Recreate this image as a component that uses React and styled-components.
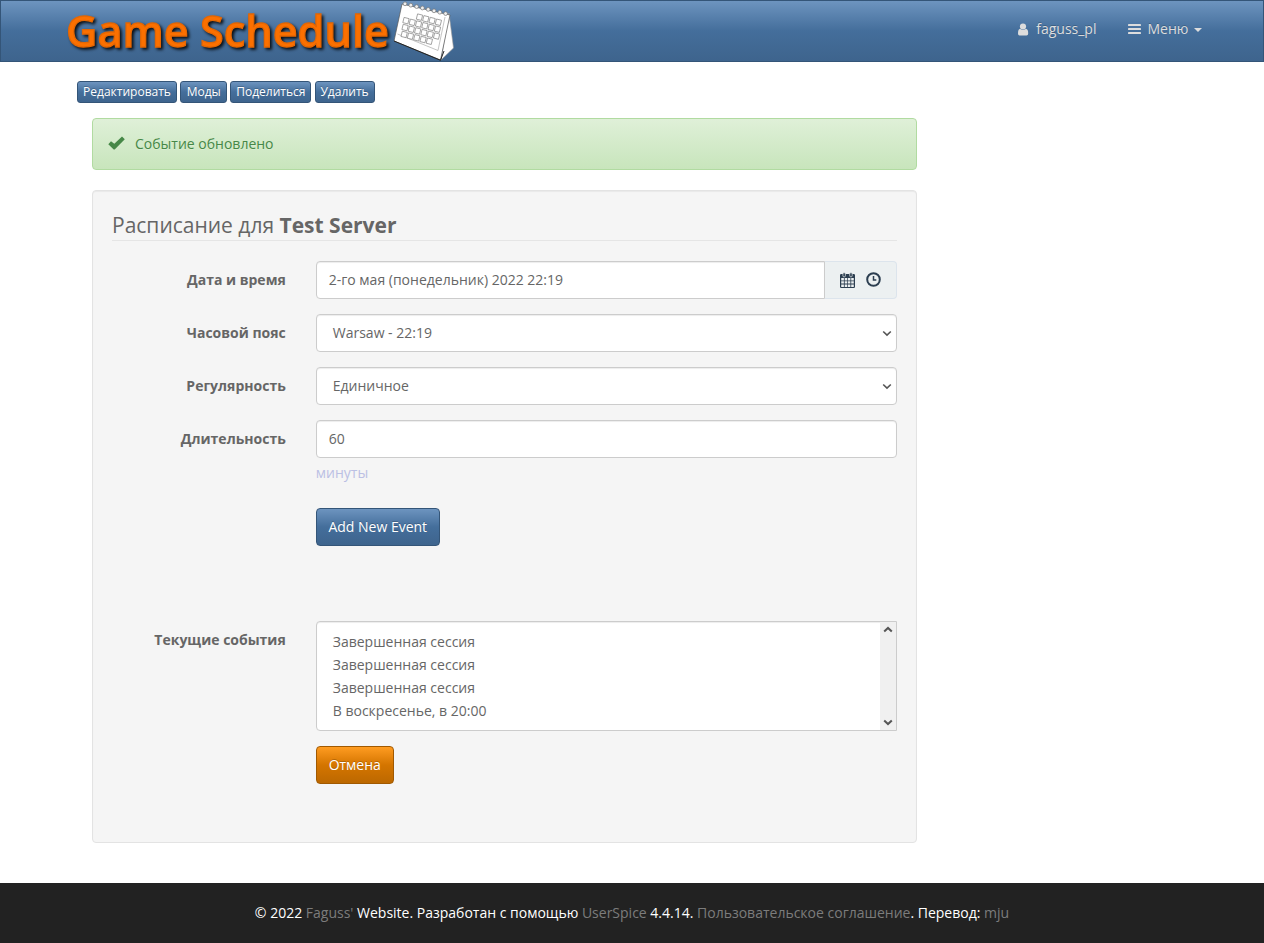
import React from "react";
import styled, { createGlobalStyle, css } from "styled-components";

const Global = createGlobalStyle`
  * { box-sizing: border-box; }
  body {
    margin: 0;
    background: #fff;
    color: #666;
    font: 14px/20px "Open Sans", "Liberation Sans", sans-serif;
  }
`;

const blueGradient = css`
  background: linear-gradient(#6d94bf, #446e9b 50%, #3e648d);
  border: 1px solid #345578;
`;
const orangeGradient = css`
  background: linear-gradient(#ff9c21, #d47500 50%, #bc6800);
  border: 1px solid #a15900;
`;

const Page = styled.div`
  display: flex;
  flex-direction: column;
  height: 943px;
  overflow: hidden;
`;
const Navbar = styled.nav`
  ${blueGradient}
  display: flex;
  justify-content: space-between;
  height: 62px;
  flex: none;
  padding: 0 61px 0 61px;
`;
const Logo = styled.svg`
  display: block;
  width: 400px;
  height: 60px;
  overflow: visible;
`;
const LogoText = styled.text`
  font: 600 44px "Open Sans", "Noto Sans", sans-serif;
  fill: #fb7000;
  stroke: #e56703;
  stroke-width: 1.3px;
  filter: drop-shadow(2px 2px 1.5px rgba(0, 0, 0, 0.85));
`;
const NavLinks = styled.div`
  display: flex;
  gap: 32px;
  padding-top: 18px;
`;
const NavLink = styled.a`
  display: flex;
  height: 20px;
  align-items: center;
  color: #ddd;
  text-shadow: 0 -1px 0 rgba(0, 0, 0, 0.2);
`;
const NavIcon = styled.svg`
  display: block;
  margin-right: ${(p) => p.$gap}px;
`;
const Caret = styled.span`
  margin: 2px 0 0 5.6px;
  border-top: 4px solid #ddd;
  border-left: 4px solid transparent;
  border-right: 4px solid transparent;
`;

const Main = styled.main`
  flex: 1;
  width: 1110px;
  margin: 19px 0 0 77px;
`;
const Toolbar = styled.div`
  display: flex;
  gap: 3.2px;
`;
const SmallButton = styled.button`
  ${blueGradient}
  width: ${(p) => p.$width}px;
  height: 22px;
  padding: 0;
  border-radius: 3px;
  color: #fff;
  font: 12px/18px "Open Sans", sans-serif;
  white-space: nowrap;
  text-shadow: 0 -1px 0 rgba(0, 0, 0, 0.2);
`;
const Content = styled.div`
  width: 825px;
  margin: 15px 0 0 15px;
`;
const Alert = styled.div`
  display: flex;
  align-items: center;
  height: 52px;
  padding: 0 15px;
  margin-bottom: 20px;
  border: 1px solid #b1dba1;
  border-radius: 4px;
  background: linear-gradient(#dff0d8, #c8e5bc);
  color: #468847;
  text-shadow: 0 1px 0 rgba(255, 255, 255, 0.2);
`;
const CheckIcon = styled.svg`
  margin: -3px 10px 0 0;
`;
const Well = styled.section`
  height: 653px;
  padding: 19px;
  border: 1px solid #e3e3e3;
  border-radius: 4px;
  background: #f5f5f5;
  box-shadow: inset 0 1px 1px rgba(0, 0, 0, 0.05);
`;
const Title = styled.h2`
  height: 31px;
  margin: 0 0 20px;
  border-bottom: 1px solid #e5e5e5;
  font-size: 21px;
  font-weight: 400;
  line-height: 30px;
`;
const Row = styled.div`
  display: grid;
  grid-template-columns: 173.75px 581.25px;
  column-gap: 30px;
  margin-bottom: ${(p) => p.$after ?? 15}px;
`;
const Label = styled.label`
  padding-top: 9px;
  font-weight: 700;
  text-align: right;
`;
const Field = styled.div`
  grid-column: 2;
`;
const Control = styled.div`
  display: flex;
  align-items: center;
  justify-content: space-between;
  height: 38px;
  flex: 1;
  padding: 0 4px 0 ${(p) => (p.$select ? 16 : 12)}px;
  border: 1px solid #ccc;
  border-radius: ${(p) => (p.$joined ? "4px 0 0 4px" : "4px")};
  background: #fff;
  box-shadow: inset 0 1px 1px rgba(0, 0, 0, 0.075);
`;
const InputGroup = styled.div`
  display: flex;
`;
const Addon = styled.div`
  display: flex;
  align-items: center;
  gap: 11px;
  width: 72px;
  padding-left: 15px;
  border: 1px solid #dce4ec;
  border-left: 0;
  border-radius: 0 4px 4px 0;
  background: #ecf0f1;
`;
const Hint = styled.p`
  margin: 5px 0 10px;
  color: #bbc0e4;
`;
const Button = styled.button`
  ${(p) => (p.$warning ? orangeGradient : blueGradient)}
  display: block;
  width: ${(p) => p.$width}px;
  height: 38px;
  padding: 0;
  border-radius: 4px;
  color: #fff;
  font: 14px/20px "Open Sans", sans-serif;
  text-shadow: 0 -1px 0 rgba(0, 0, 0, 0.2);
`;
const ListBox = styled.div`
  display: flex;
  justify-content: space-between;
  height: 110px;
  border: 1px solid #ccc;
  border-radius: 4px 0 0 4px;
  background: #fff;
  box-shadow: inset 0 1px 1px rgba(0, 0, 0, 0.075);
`;
const Options = styled.ul`
  margin: 0;
  padding: 8px 0 0 16px;
  list-style: none;
  line-height: 23px;
`;
const Scrollbar = styled.div`
  display: flex;
  flex-direction: column;
  justify-content: space-between;
  align-items: center;
  width: 16px;
  padding: 4px 0;
  background: #f0f0f0;
`;
const Footer = styled.footer`
  flex: none;
  height: 60px;
  padding-top: 20px;
  background: #222;
  color: #fff;
  text-align: center;
`;
const FooterLink = styled.a`
  color: #7c7c7c;
`;

const calendarCells = [
  [2, 3, 4, 5],
  [0, 1, 2, 3, 4, 5],
  [0, 1, 2, 3, 4, 5],
  [0, 1, 2, 3, 4],
];

function DeskCalendar() {
  return (
    <g strokeLinejoin="round">
      <path d="M387 12 L391.500 47 L379 59Z" fill="#fff" stroke="#999" strokeWidth=".6" />
      <path d="M340 3 L388 14 L378.500 59 L332 40Z" fill="#fff" stroke="#555" strokeWidth=".7" />
      <path d="M332 40 L378.500 59.300 L382 50" fill="none" stroke="#222" strokeWidth="1" />
      <path d="M335.500 33 L376 49.500 L383 16" fill="none" stroke="#aaa" strokeWidth=".7" />
      {calendarCells.map((row, r) =>
        row.map((c) => (
          <rect
            key={`${r}-${c}`}
            width="5.200"
            height="5.400"
            fill="#fff"
            stroke="#888"
            strokeWidth=".7"
            transform={`translate(${343 + c * 6.3 - r * 0.9} ${9.500 + c * 1.7 + r * 6.9}) rotate(14)`}
          />
        ))
      )}
      {[0, 1, 2, 3, 4, 5, 6, 7].map((i) => (
        <ellipse key={i} cx={343 + i * 5.8} cy={2.8 + i * 1.4} rx="1.9" ry="1.9" fill="#eee" stroke="#777" strokeWidth=".7" />
      ))}
    </g>
  );
}

function Chevron({ up, heavy }) {
  return (
    <svg width="10" height="7" viewBox="0 0 10 7" fill="none" stroke="#555" strokeWidth={heavy ? 2 : 1.6}>
      <path d={up ? "M1.200 5.500 L5 1.900 L8.800 5.500" : "M1.200 1.500 L5 5.100 L8.800 1.500"} />
    </svg>
  );
}

function CalendarIcon() {
  return (
    <svg width="15" height="16" viewBox="0 0 15 16" fill="#2c3e50">
      <path fillRule="evenodd" d="M1.200 2H13.800Q15 2 15 3.200V14.800Q15 16 13.800 16H1.200Q0 16 0 14.800V3.200Q0 2 1.200 2ZM1.200 6V8.400H3.900V6ZM4.700 6V8.400H7.200V6ZM7.900 6V8.400H10.400V6ZM11.200 6V8.400H13.800V6ZM1.200 9.200V11.600H3.900V9.200ZM4.700 9.200V11.600H7.200V9.200ZM7.900 9.200V11.600H10.400V9.200ZM11.200 9.200V11.600H13.800V9.200ZM1.200 12.400V14.900H3.900V12.400ZM4.700 12.400V14.900H7.200V12.400ZM7.900 12.400V14.900H10.400V12.400ZM11.200 12.400V14.900H13.800V12.400Z" />
      <rect x="2.900" y=".8" width="2.500" height="4" rx="1" stroke="#ecf0f1" strokeWidth=".7" />
      <rect x="9.700" y=".8" width="2.500" height="4" rx="1" stroke="#ecf0f1" strokeWidth=".7" />
    </svg>
  );
}

function ClockIcon() {
  return (
    <svg width="16" height="16" viewBox="0 0 16 16" fill="none" stroke="#2c3e50">
      <circle cx="7.500" cy="7.500" r="6.300" strokeWidth="2" />
      <path d="M7.500 4V8H10.300" strokeWidth="1.500" />
    </svg>
  );
}

const actions = [
  ["Редактировать", 100],
  ["Моды", 47],
  ["Поделиться", 81],
  ["Удалить", 60],
];
const events = ["Завершенная сессия", "Завершенная сессия", "Завершенная сессия", "В воскресенье, в 20:00"];

export default function App() {
  return (
    <Page>
      <Global />
      <Navbar>
        <Logo viewBox="0 0 400 60">
          <LogoText x="4" y="46" textLength="323" lengthAdjust="spacingAndGlyphs">Game Schedule</LogoText>
          <DeskCalendar />
        </Logo>
        <NavLinks>
          <NavLink>
            <NavIcon $gap={7} width="11" height="13" viewBox="0 0 11 13" fill="#ddd">
              <circle cx="5" cy="3.500" r="3.100" />
              <path d="M2.100 5.800Q5 8.200 7.900 5.800Q10.200 6 10.200 10.600Q10.200 12.500 8.500 12.500H1.500Q0 12.500 0 10.600Q0 6 2.100 5.800Z" />
            </NavIcon>
            faguss_pl
          </NavLink>
          <NavLink>
            <NavIcon $gap={6} width="13" height="12" viewBox="0 0 13 12" fill="#ddd">
              <rect y="1" width="13" height="2" rx=".4" />
              <rect y="5" width="13" height="2" rx=".4" />
              <rect y="9" width="13" height="2" rx=".4" />
            </NavIcon>
            Меню
            <Caret />
          </NavLink>
        </NavLinks>
      </Navbar>
      <Main>
        <Toolbar>
          {actions.map(([name, width]) => (
            <SmallButton key={name} $width={width}>{name}</SmallButton>
          ))}
        </Toolbar>
        <Content>
          <Alert>
            <CheckIcon width="17" height="14" viewBox="0 0 17 14" fill="#468847">
              <path d="M.3 8.200L3 5.300L6.300 7.700L14 .5L16.800 3.200L6.700 13.500H5.700Z" />
            </CheckIcon>
            Событие обновлено
          </Alert>
          <Well>
            <Title>Расписание для <b>Test Server</b></Title>
            <Row>
              <Label>Дата и время</Label>
              <InputGroup>
                <Control $joined>2-го мая (понедельник) 2022 22:19</Control>
                <Addon><CalendarIcon /><ClockIcon /></Addon>
              </InputGroup>
            </Row>
            <Row>
              <Label>Часовой пояс</Label>
              <Control $select>Warsaw - 22:19<Chevron /></Control>
            </Row>
            <Row>
              <Label>Регулярность</Label>
              <Control $select>Единичное<Chevron /></Control>
            </Row>
            <Row>
              <Label>Длительность</Label>
              <Field>
                <Control>60</Control>
                <Hint>минуты</Hint>
              </Field>
            </Row>
            <Row $after={75}>
              <Field><Button $width={124}>Add New Event</Button></Field>
            </Row>
            <Row>
              <Label>Текущие события</Label>
              <ListBox>
                <Options>{events.map((e, i) => <li key={i}>{e}</li>)}</Options>
                <Scrollbar><Chevron up heavy /><Chevron heavy /></Scrollbar>
              </ListBox>
            </Row>
            <Row>
              <Field><Button $warning $width={78}>Отмена</Button></Field>
            </Row>
          </Well>
        </Content>
      </Main>
      <Footer>
        © 2022 <FooterLink>Faguss'</FooterLink> Website. Разработан с помощью <FooterLink>UserSpice</FooterLink> 4.4.14. <FooterLink>Пользовательское соглашение</FooterLink>. Перевод: <FooterLink>mju</FooterLink>
      </Footer>
    </Page>
  );
}
